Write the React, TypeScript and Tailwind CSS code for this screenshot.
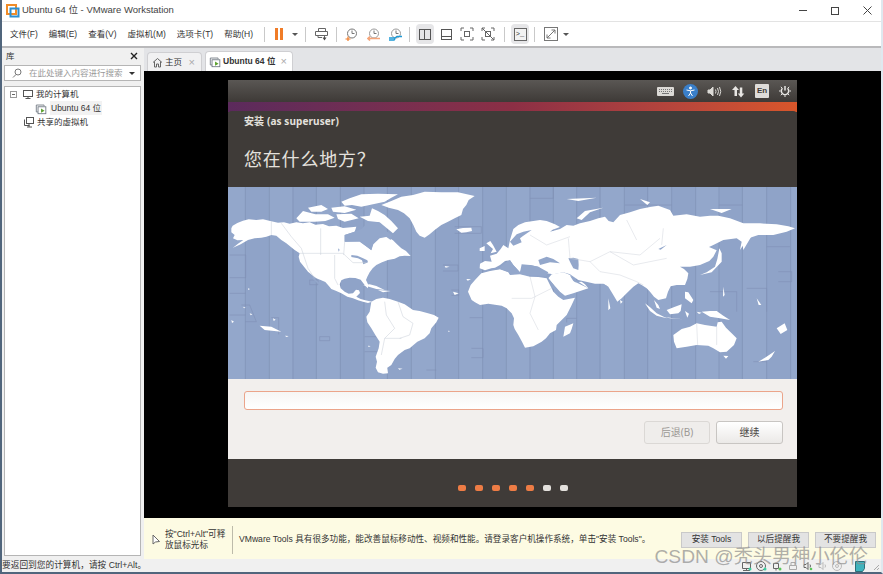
import type { ReactNode } from "react";

const CJK = "font-['Liberation_Sans','Noto_Sans_CJK_SC',sans-serif]";

const menus = ["文件(F)", "编辑(E)", "查看(V)", "虚拟机(M)", "选项卡(T)", "帮助(H)"];
const zoneLines = [52, 124, 195, 265, 337, 408, 478, 550, 622, 692, 764, 835];
const eastLines = [60, 130, 200, 270, 343, 413, 485, 557, 627, 697, 770, 842];
const stepLoop = [0, 1, 2, 3, 4, 5, 6, 7, 8, 9, 10, 11];

const Sep = () => <div className="w-px h-[15px] bg-[#c9c9c9]" />;

const ToolIcon = ({ active, children }: { active?: boolean; children: ReactNode }) => (
  <div
    className={
      active
        ? "w-[18px] h-[20px] flex items-center justify-center rounded-sm bg-[#e6e6e8]"
        : "w-[18px] h-[20px] flex items-center justify-center"
    }
  >
    {children}
  </div>
);

const VmIcon = () => (
  <svg width="13" height="13" viewBox="0 0 15 15" fill="none">
    <path d="M1.500 3.500h9v1M1.500 3.500v8h2" stroke="#6d7680" />
    <rect x="3.500" y="5.500" width="9" height="8" fill="#fff" stroke="#6d7680" />
    <path d="M7 7.500l4 2.500-4 2.500z" fill="#5aa02c" />
  </svg>
);

const Clock = ({ color, kind }: { color: string; kind: "plus" | "back" | "tool" }) => (
  <svg width="13" height="13" viewBox="0 0 13 13" fill="none">
    <circle cx="7" cy="5.500" r="4.500" stroke={kind === "plus" ? "#777" : "#999"} />
    <path d="M7 2.500v3h2.500" stroke="#777" />
    {kind === "plus" && <path d="M.5 11h5M3 8.500v4.500" stroke={color} strokeWidth="1.200" />}
    {kind === "back" && <path d="M1 10.500h12M3 8.500l-2 2 2 2" stroke={color} strokeWidth="1.600" />}
    {kind === "tool" && <path d="M0 10h6l2-1.500h5M0 12h5l1-1" stroke={color} strokeWidth="1.500" />}
  </svg>
);

const Toolbar = () => (
  <div className={`h-[26px] shrink-0 flex items-center bg-white border-b-2 border-[#b9b9bb] text-[8.500px] text-[#333] ${CJK}`}>
    <div className="flex w-[256px] pl-[8px] gap-[11px] whitespace-nowrap">
      {menus.map((m) => (
        <span key={m}>{m}</span>
      ))}
    </div>
    <div className="ml-[6px]">
      <Sep />
    </div>
    <div className="ml-[10px] flex items-center">
      <div className="w-[3px] h-[12px] bg-[#f07c28]" />
      <div className="w-[3px] h-[12px] bg-[#f07c28] ml-[2px]" />
      <div className="ml-[9px] border-x-[3px] border-t-[3px] border-x-transparent border-t-[#555]" />
    </div>
    <div className="ml-[7px]">
      <Sep />
    </div>
    <div className="ml-[9px]">
      <svg width="13" height="14" viewBox="0 0 13 14" fill="none" stroke="#666">
        <path d="M3.500 4.500V1.500h7v3M.5 4.500h12v4H.5zM3 8.500v2h4" />
        <path d="M9.500 8v4" />
        <path d="M7.500 10.500h4l-2 3z" fill="#444" stroke="none" />
      </svg>
    </div>
    <div className="ml-[8px]">
      <Sep />
    </div>
    <div className="flex items-center gap-[9px] ml-[8px]">
      <Clock color="#f07c28" kind="plus" />
      <Clock color="#f5a57a" kind="back" />
      <Clock color="#1e9ad6" kind="tool" />
    </div>
    <div className="ml-[7px]">
      <Sep />
    </div>
    <div className="flex items-center gap-[3px] ml-[6px]">
      <ToolIcon active>
        <svg width="13" height="13" viewBox="0 0 13 13" fill="none" stroke="#555">
          <rect x="0.500" y="1.500" width="11" height="10" />
          <path d="M5.500 1.500v10" />
        </svg>
      </ToolIcon>
      <ToolIcon>
        <svg width="13" height="13" viewBox="0 0 13 13" fill="none" stroke="#555">
          <rect x="1.500" y="1.500" width="10" height="10" />
          <path d="M1.500 8.500h10" />
        </svg>
      </ToolIcon>
      <ToolIcon>
        <svg width="14" height="14" viewBox="0 0 14 14" fill="none" stroke="#666">
          <path d="M1 4V1h3M10 1h3v3M13 10v3h-3M4 13H1v-3" />
          <rect x="4.500" y="4.500" width="5" height="5" />
        </svg>
      </ToolIcon>
      <ToolIcon>
        <svg width="14" height="14" viewBox="0 0 14 14" fill="none" stroke="#666">
          <path d="M1 4V1h3M10 1h3v3M13 10v3h-3M4 13H1v-3M1 1l12 12" />
          <rect x="4.500" y="4.500" width="5" height="5" />
        </svg>
      </ToolIcon>
    </div>
    <div className="ml-[7px]">
      <Sep />
    </div>
    <div className="ml-[6px] w-[18px] h-[20px] rounded-sm bg-[#e6e6e8] flex items-center justify-center">
      <div className="w-[13px] h-[13px] border border-[#666] bg-[#f2f2f2] text-[7px] leading-[11px] text-[#333] font-['Liberation_Mono',monospace] text-center">
        &gt;_
      </div>
    </div>
    <div className="ml-[5px]">
      <Sep />
    </div>
    <div className="ml-[9px]">
      <svg width="14" height="14" viewBox="0 0 14 14" fill="none" stroke="#777">
        <rect x="0.500" y="0.500" width="13" height="13" />
        <path d="M3 11l8-8M7.500 3H11v3.500M3 7.500V11h3.500" />
      </svg>
    </div>
    <div className="ml-[5px] border-x-[3px] border-t-[3px] border-x-transparent border-t-[#555]" />
  </div>
);

const Sidebar = () => (
  <div className={`w-[142px] shrink-0 flex flex-col bg-[#f0f0f0] pl-[2px] pr-[3px] pb-[3px] text-[8.500px] text-[#333] ${CJK}`}>
    <div className="h-[16px] flex items-center justify-between pl-[2px] pr-[3px]">
      <span>库</span>
      <svg width="8" height="8" viewBox="0 0 8 8" stroke="#222" strokeWidth="1.400">
        <path d="M1 1l6 6M7 1L1 7" />
      </svg>
    </div>
    <div className="h-[16px] mt-px flex items-center border border-[#b5b5b5] bg-white pl-[7px] pr-[5px] text-[#999]">
      <svg width="10" height="10" viewBox="0 0 10 10" fill="none" stroke="#777">
        <circle cx="6" cy="4" r="3" />
        <path d="M4 6.500L1 9.500" />
      </svg>
      <span className="ml-[7px] flex-1 whitespace-nowrap">在此处键入内容进行搜索</span>
      <div className="border-x-[3px] border-t-[3px] border-x-transparent border-t-[#333]" />
    </div>
    <div className="mt-[5px] flex-1 border border-[#b5b5b5] bg-white">
      <div className="h-[14px] flex items-center pl-[5px]">
        <div className="w-[7px] h-[7px] border border-[#999] flex items-center justify-center">
          <div className="w-[3px] h-px bg-[#666]" />
        </div>
        <svg className="ml-[5px]" width="12" height="12" viewBox="0 0 12 12" fill="none" stroke="#555">
          <rect x="1.500" y="2.500" width="9" height="6" />
          <path d="M6 8.500v2M3.500 10.500h5" />
        </svg>
        <span className="ml-[2px]">我的计算机</span>
      </div>
      <div className="h-[14px] flex items-center pl-[30px]">
        <VmIcon />
        <span className="ml-[2px] h-full px-[1px] bg-[#f2f2f2] leading-[14px] whitespace-nowrap">Ubuntu 64 位</span>
      </div>
      <div className="h-[14px] flex items-center pl-[18px]">
        <svg width="12" height="12" viewBox="0 0 12 12" fill="none" stroke="#555">
          <rect x="3.500" y="1.500" width="7" height="6" />
          <path d="M1.500 3.500v6h5M6 8v3M4 11h5" />
        </svg>
        <span className="ml-[2px]">共享的虚拟机</span>
      </div>
    </div>
  </div>
);

const Tabs = () => (
  <div className={`h-[23px] shrink-0 flex items-end bg-[#e3e4e7] pl-[3px] text-[8.500px] text-[#333] ${CJK}`}>
    <div className="w-[55px] h-[19px] flex items-center pl-[4px] bg-[#f1f1f2] border border-b-0 border-[#cfcfd2] rounded-t-sm">
      <svg width="11" height="11" viewBox="0 0 11 11" fill="none" stroke="#666">
        <path d="M1 5.500L5.500 1.500 10 5.500M2.500 4.500v5.500h2V7h2v3h2V4.500" />
      </svg>
      <span className="ml-[2px]">主页</span>
      <span className="ml-auto mr-[6px] text-[#aaa] text-[11px] leading-none">×</span>
    </div>
    <div className="ml-[3px] w-[88px] h-[20px] flex items-center pl-[3px] bg-white border border-b-0 border-[#cfcfd2] rounded-t-sm font-bold">
      <VmIcon />
      <span className="ml-[1px] whitespace-nowrap">Ubuntu 64 位</span>
      <span className="ml-auto mr-[5px] text-[#aaa] text-[11px] font-normal leading-none">×</span>
    </div>
  </div>
);

const WorldMap = () => (
  <svg className="block shrink-0 blur-[0.3px]" width="569" height="192" viewBox="228 187 569 192">
    <rect x="228" y="187" width="569" height="192" fill="#93a7cb" />
    {stepLoop.map((i) => (
      <rect key={i} x={245.3 + i * 47.4} y="187" width="23.700" height="192" fill="#8fa3c8" />
    ))}
    <g transform="translate(228 185) scale(0.33333)">
      {zoneLines.map((x) => (
        <path key={x} d={`M${x} 5V583`} stroke="#7f91b5" strokeWidth="2.200" />
      ))}
      <g fill="none" stroke="#7f91b5" strokeWidth="1.800">
        <path d="M5 210h48v68H5M5 325h48M5 390h48M40 360h25l20 50H52M130 398h22v50M275 455h30v12h-30zM245 285h25v14h-25zM410 455h50v45h-50M645 240h45v18h-45M725 398h40M730 490h35v28h-35M595 555h30M670 315h22v16h-22M680 125h80v20h-80" />
      </g>
      <g fill="#fff">
        <path d="M10 130L14 122 28 114 45 107 62 103 85 105 105 103 130 109 150 113 168 112 185 116 205 112 225 115 245 112 262 119 285 117 303 124 325 122 345 129 385 125 380 140 350 150 350 170 395 170 412 182 430 196 436 178 455 160 478 155 495 166 507 178 520 190 534 198 548 213 530 212 515 214 500 221 480 225 462 232 445 240 434 250 425 262 418 275 414 285 420 298 420 310 413 304 407 296 398 284 382 279 365 278 350 281 340 286 335 298 338 310 350 320 362 326 375 325 384 314 393 316 396 324 385 335 398 342 412 346 432 350 420 354 405 350 390 346 375 340 358 335 340 325 325 318 310 312 300 300 292 291 278 285 265 280 252 270 240 260 228 245 216 230 212 215 215 205 200 195 175 175 160 165 145 152 130 150 115 155 100 158 80 160 60 165 38 178 15 188 30 176 46 165 28 166 15 160 20 150 10 142Z" />
        <path d="M430 350L445 342 465 338 485 342 510 350 530 358 555 375 575 378 600 385 618 390 632 398 625 412 610 430 605 445 590 460 568 470 545 490 530 495 510 510 500 522 490 540 478 548 480 565 465 566 450 562 443 548 447 530 443 515 452 490 455 470 442 450 430 430 418 412 415 395 425 380Z" />
        <path d="M460 60L490 48 520 35 555 30 590 20 640 22 690 22 740 33 722 45 715 60 705 72 700 90 680 100 660 110 640 120 620 135 605 148 590 158 575 152 565 140 556 120 545 100 528 85 510 75 482 68Z" />
        <path d="M685 133L705 129 730 128 732 138 715 142 700 143Z" />
        <path d="M340 50L365 40 400 28 450 26 510 28 490 38 470 50 435 58 400 65 372 60 350 62Z" />
        <path d="M240 68L280 60 300 72 280 80 250 80ZM310 68L350 64 385 74 350 84 315 80ZM205 100L225 78 262 88 300 88 320 98 292 108 260 110 215 110ZM325 88L370 86 392 100 350 110 330 102Z" />
        <path d="M395 95L425 92 432 70 450 78 470 90 490 108 510 130 495 145 475 128 455 112 420 108Z" />
        <path d="M775 175L787 168 795 180 806 200 788 205 795 192ZM755 190L770 183 770 198 755 198Z" />
        <path d="M405 300L425 298 445 303 470 315 445 312 425 306ZM450 315L488 318 465 322Z" />
        <path d="M95 422L130 425 160 440 110 435ZM10 405l8 5-6 4zM135 400l8 4-6 4zM60 310l6 2-5 3zM660 437l6 1-4 3zM675 320l17 5-12 5zM420 482l8 1-6 3zM510 550l14 1-10 3zM650 243l15 2-12 3zM65 385l8 3-5 3zM45 365l8 3-5 2zM170 452l12 1-6 3zM715 282l14 1-10 4z" />
      </g>
      <g fill="#93a7cb">
        <path d="M350 150L375 142 400 132 420 112 452 112 478 140 492 150 488 165 470 152 440 155 430 195 410 180 395 168 350 170Z" />
        <path d="M370 210l18 2 14 6 16 8 2 6-14 6-4-12-12-6-20-4zM330 190l5 4-3 6zM255 276l25 24-4 2-24-22z" />
      </g>
      <g fill="none" stroke="#c7ccd6" strokeWidth="1.500">
        <path d="M130 108v42M160 115l30 40 30 35 20 60 20 30M215 205h130l30 28h40M278 130v80M320 210v70l10 20M350 170l-3 40M470 350l5 40 25 40-30 30-10 50M510 350l15 45 30 20-10 35-30 10M470 460h50" />
      </g>
    </g>
    <g transform="translate(510 185) scale(0.33333)">
      <g fill="none" stroke="#7f91b5" strokeWidth="2.200">
        {eastLines.map((x) => (
          <path key={x} d={`M${x} 5V583`} />
        ))}
        <path d="M60 40h70v-35M345 60h140M627 60h70M770 185h70M805 260h40v30h-40M710 310h60v70M600 320h80v60M200 400h-30M170 400v12M730 530h40" strokeWidth="1.800" />
      </g>
      <g fill="#fff">
        <path d="M-91 250L-90 236-75 228-55 230-60 212-40 206-28 192-20 180-5 190 0 165 10 132 25 120 45 112 70 108 90 105 110 108 135 118 150 126 128 134 120 140 150 132 170 120 190 122 210 115 240 108 265 100 285 95 296 108 310 112 330 90 360 82 390 72 420 66 445 62 480 75 490 92 530 88 570 95 600 92 625 92 660 100 700 115 750 115 800 118 835 124 855 130 830 140 790 150 745 150 720 158 700 180 690 195 695 170 680 160 640 165 610 180 597 186 620 196 610 215 598 228 570 240 540 245 510 245 522 252 535 265 532 282 525 300 500 300 482 304 474 320 468 340 445 345 432 335 420 320 410 310 395 300 385 295 370 305 350 325 335 340 322 350 310 330 295 305 280 296 255 296 235 292 205 285 180 268 160 262 130 268 110 265 85 245 60 240 35 238 30 262 10 240 0 226-15 228-30 240-45 248-56 250-75 256Z" />
        <path d="M-126 320L-118 300-105 285-86 265-60 258-30 253-5 262 0 270 30 268 60 275 85 276 110 280 120 300 130 320 145 335 160 345 195 338 185 360 170 390 155 405 140 420 138 435 120 445 108 460 95 470 70 484 45 488 36 470 25 450 14 432 10 420 12 400 5 385-10 370-25 362-40 360-65 356-90 360-105 352-115 345Z" />
        <path d="M115 280L130 298 150 320 165 332 190 325 235 310 225 298 215 290 195 292 180 270 160 262 125 268Z" />
        <path d="M490 450L515 432 540 425 560 415 585 420 620 425 623 412 635 410 648 428 665 445 680 460 672 480 650 500 630 502 610 490 595 482 560 480 530 485 500 490 492 470Z" />
        <path d="M745 530L765 518 795 498 785 515 775 525ZM640 512l15 1-7 8zM160 455L165 425 190 415 185 432 180 445ZM575 380L600 378 620 378 640 392 660 405 630 400 600 395ZM470 375L495 365 515 358 512 378 505 385 480 388ZM525 320L535 322 550 345 545 355 525 340ZM405 355L422 368 440 385 470 400 440 392 420 378ZM460 395L490 400 520 403 480 400ZM432 345L445 360 450 372 440 368ZM570 270L590 262 615 245 622 222 628 190 635 205 635 230 605 262ZM695 160L725 153 712 175 700 195ZM200 100L225 78 280 68 240 82 215 105ZM170 42L260 38 205 48ZM390 42l30 10-8 8ZM600 72h65l-30 12ZM330 345l8 5-6 6zM295 340l6 30-6 6zM525 378l12 8-5 12zM740 340l14 20-8 0zM560 380l15 3-8 4zM800 430l24-15 8 20-20 12zM640 305l4 25-5 5z" />
      </g>
      <g fill="#93a7cb">
        <path d="M0 170L20 148 40 140 65 135 40 152 30 160 35 172 10 182ZM85 225L110 215 130 222 150 235 120 232 90 240ZM175 220L190 218 205 222 206 240 205 255 190 250 182 235ZM445 192l25-12-18 14z" />
        <path d="M110 272L115 280 135 305 160 335 145 330 125 305ZM180 272L205 290 235 310 210 298 190 288Z" />
        <path d="M-60 256L-30 248-10 230 0 226 10 240 30 262 40 240 60 240 85 245 115 262 108 274 85 272 60 272 30 266 0 268-5 260-30 252Z" />
        <path d="M280 296l15 9-10-1z" />
      </g>
      <g fill="none" stroke="#d0d4dc" strokeWidth="1.500">
        <path d="M60 150l50 30 70-25M175 160l5 60 60 10 60-30 90 10 60-50M300 200l70 40 100-20M240 230l30 30 60 10 50 20 20 10M380 165l-30-60M460 130l-5 50M60 275l15 60-15 50 25 50M5 340h60l60-30M560 415l3 65M620 425v55" />
      </g>
    </g>
  </svg>
);

const Guest = () => (
  <div className="w-[569px] h-[427px] mt-[9px] flex flex-col bg-[#3f3b38]">
    <div className="h-[22px] shrink-0 flex items-center justify-end pr-[6px] gap-[10px] bg-gradient-to-b from-[#5a5754] to-[#3e3a37]">
      <svg width="17" height="9" viewBox="0 0 17 9">
        <rect width="17" height="9" rx="1" fill="#dcdad6" />
        <path d="M2 2.500h13M2 4.500h13" stroke="#777" strokeDasharray="1 1" />
        <path d="M5 6.500h7" stroke="#777" />
      </svg>
      <div className="w-[15px] h-[15px] rounded-full bg-[#3a7fc9] flex items-center justify-center -mx-[1px]">
        <svg width="11" height="11" viewBox="0 0 11 11" fill="none" stroke="#fff">
          <circle cx="5.500" cy="2" r="1" fill="#fff" />
          <path d="M1.500 4l4 .8 4-.8M5.500 5v2l-2 3M5.500 7l2 3" />
        </svg>
      </div>
      <svg width="15" height="11" viewBox="0 0 15 11" fill="none" stroke="#dcdad6">
        <path d="M1 4h2l3-3v9l-3-3H1z" fill="#dcdad6" />
        <path d="M8.500 3.500q1 2 0 4M10.500 2q2 3.500 0 7M12.500 1q2.500 4.500 0 9" />
      </svg>
      <svg width="13" height="13" viewBox="0 0 13 13" fill="#e8e6e3">
        <path d="M3.500 1L7 5H5v6H2.500V5H0z" />
        <path d="M9 12.500L5.800 8.500h2V2.500h2.500v6h2z" />
      </svg>
      <div className="w-[14px] h-[14px] bg-[#dedcd9] rounded-[1px] text-[8px] leading-[14px] text-center text-[#3f3b38] font-bold font-['Liberation_Sans',sans-serif]">
        En
      </div>
      <svg width="12" height="12" viewBox="0 0 12 12" fill="none" stroke="#e8e6e3" strokeWidth="1.500">
        <path d="M3.500 3.200a3.700 3.700 0 1 0 5 0M6 1v4.500" />
        <path d="M1.800 1.800l1.200 1.200M10.200 1.800L9 3M0 6h1.500M10.500 6H12M6 10.500V12M1.800 10.200L3 9M10.200 10.200L9 9" strokeWidth="1" />
      </svg>
    </div>
    <div className="h-[10px] shrink-0 bg-gradient-to-r from-[#5b2a5c] via-[#8c2f45] to-[#d8562a]" />
    <div className="h-[76px] shrink-0 rounded-t-[4px] bg-[#3f3b38] pl-[16px] -mt-px text-[#e4e1dd] font-['Noto_Sans','Noto_Sans_CJK_SC',sans-serif]">
      <div className="pt-[2px] text-[10px] leading-[16px] font-bold whitespace-nowrap tracking-[.1px]">安装 (as superuser)</div>
      <div className="mt-[18px] text-[18px] leading-[24px] font-normal tracking-[.8px]">您在什么地方？</div>
    </div>
    <WorldMap />
    <div className="h-[80px] shrink-0 bg-[#f2efed] pl-[16px] pr-[14px] pt-[12px] font-['Noto_Sans','Noto_Sans_CJK_SC',sans-serif]">
      <div className="h-[19px] rounded-[3px] border border-[#eba48a] bg-gradient-to-b from-[#f6f5f4] to-white" />
      <div className="flex justify-end gap-[6px] mt-[11px] text-[10px]">
        <div className="w-[66px] h-[23px] rounded-[3px] border border-[#dbd8d5] bg-[#efedeb] text-[#9c9995] flex items-center justify-center">
          后退(B)
        </div>
        <div className="w-[67px] h-[23px] rounded-[3px] border border-[#c8c5c2] bg-gradient-to-b from-white to-[#ebe9e7] text-[#4a4744] flex items-center justify-center">
          继续
        </div>
      </div>
    </div>
    <div className="flex-1 flex items-start justify-center gap-[9px] pt-[26px]">
      {["a", "b", "c", "d", "e"].map((k) => (
        <div key={k} className="w-[8px] h-[6px] rounded-[2px] bg-[#ee7c45]" />
      ))}
      {["f", "g"].map((k) => (
        <div key={k} className="w-[8px] h-[6px] rounded-[2px] bg-[#e3e0dc]" />
      ))}
    </div>
  </div>
);

const HintBar = () => (
  <div className={`h-[41px] shrink-0 flex items-center pt-[2px] bg-[#fdfbe3] text-[8.600px] text-[#333] ${CJK}`}>
    <svg className="ml-[8px]" width="9" height="12" viewBox="0 0 9 12" fill="#fff" stroke="#666">
      <path d="M1 1v9l2.500-2 4-.5z" />
    </svg>
    <div className="ml-[4px] w-[64px] leading-[11px]">
      按"Ctrl+Alt"可释
      <br />
      放鼠标光标
    </div>
    <div className="ml-[3px] w-px h-[28px] bg-[#bdbbaa]" />
    <div className="ml-[6px] flex-1 whitespace-nowrap">VMware Tools 具有很多功能，能改善鼠标移动性、视频和性能。请登录客户机操作系统，单击"安装 Tools"。</div>
    <div className="flex gap-[6px] pr-[5px]">
      {["安装 Tools", "以后提醒我", "不要提醒我"].map((b) => (
        <div key={b} className="w-[61px] h-[16px] bg-[#e3e3e3] border border-[#c9c9c9] flex items-center justify-center whitespace-nowrap">
          {b}
        </div>
      ))}
    </div>
  </div>
);

const StatusBar = () => (
  <div className={`h-[13px] shrink-0 flex items-center justify-between bg-[#f0f0f0] text-[8.700px] text-[#333] ${CJK}`}>
    <span>要返回到您的计算机，请按 Ctrl+Alt。</span>
    <svg width="140" height="12" viewBox="742 560 140 12" fill="none" stroke="#666">
      <path d="M743.500 562.500h8v6h-8zM747.500 568.500v2M744 570.500h7" />
      <circle cx="751" cy="569" r="1.500" fill="#3dd0a0" stroke="none" />
      <circle cx="762" cy="566" r="4.500" />
      <circle cx="762" cy="566" r="1.500" />
      <circle cx="766" cy="569" r="1.500" fill="#3dd0a0" stroke="none" />
      <path d="M774.500 563.500h5v5h-5zM777 568.500v2" />
      <circle cx="781" cy="569" r="1.500" fill="#5ac85a" stroke="none" />
      <path d="M790.500 565.500h7v4h-7zM792 565.500v-3h4v3" stroke="#aaa" />
      <path d="M805 564.500h2l2-2v7l-2-2h-2zM811 564.500q1 1.500 0 3" />
      <circle cx="812" cy="569" r="1.300" fill="#5ac85a" stroke="none" />
      <path d="M820 564.500h2l2-2v7l-2-2h-2zM826 564.500q1 1.500 0 3" stroke="#bbb" />
      <circle cx="838" cy="566" r="4.500" stroke="#bbb" />
      <circle cx="838" cy="566" r="1.500" stroke="#bbb" />
      <path d="M856.500 561.500h9v7l-2 3h-7z" fill="#3fb3bd" stroke="#2c6f78" />
      <path d="M875 570l5-5M878 570l2-2" stroke="#aaa" />
    </svg>
  </div>
);

export default function App() {
  return (
    <div className="relative w-[883px] h-[574px] overflow-hidden flex flex-col bg-white border-l-[2px] border-b-[2px] border-r-[2px] border-l-[#50657c] border-b-[#50657c] border-r-[#dfe8ef]">
      <div className={`h-[22px] shrink-0 flex items-center border-b border-[#e3e3e3] text-[9.500px] text-[#444] ${CJK}`}>
        <svg className="ml-[4px]" width="14" height="14" viewBox="0 0 14 14" fill="none">
          <rect x="1" y="1" width="9" height="9" stroke="#f08c28" strokeWidth="2" />
          <rect x="4.500" y="4.500" width="8" height="8" stroke="#2d8fd0" strokeWidth="2" />
        </svg>
        <span className="ml-[2px] whitespace-nowrap">Ubuntu 64 位 - VMware Workstation</span>
        <div className="ml-auto flex items-center gap-[24px] pr-[9px]">
          <div className="w-[8px] h-px bg-[#444]" />
          <div className="w-[8px] h-[8px] border border-[#444]" />
          <svg width="9" height="9" viewBox="0 0 9 9" stroke="#444">
            <path d="M.5 .5l8 8M8.500 .5l-8 8" />
          </svg>
        </div>
      </div>
      <Toolbar />
      <div className="flex-1 min-h-0 flex">
        <Sidebar />
        <div className="flex-1 min-w-0 flex flex-col">
          <Tabs />
          <div className="flex-1 min-h-0 flex justify-center bg-black">
            <Guest />
          </div>
          <HintBar />
        </div>
      </div>
      <StatusBar />
      <div className="absolute right-[13px] bottom-[3px] text-[19.200px] leading-[24px] text-[#8d8d8d]/70 font-['Liberation_Sans','Noto_Sans_CJK_SC',sans-serif] whitespace-nowrap">
        CSDN @秃头男神小伦伦
      </div>
    </div>
  );
}
